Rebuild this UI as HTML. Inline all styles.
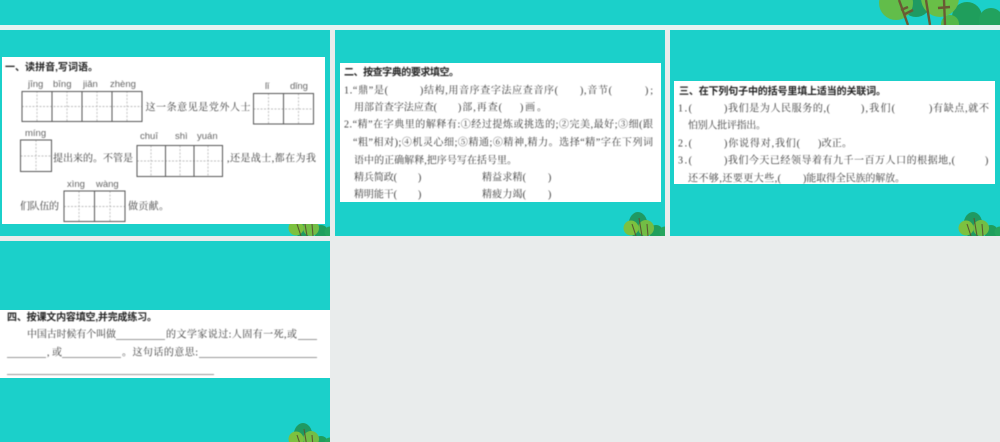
<!DOCTYPE html>
<html lang="zh"><head><meta charset="utf-8"><title>语文练习</title>
<style>
html,body{margin:0;padding:0;width:1000px;height:442px;overflow:hidden;background:#e9ecec}
svg{position:absolute;left:0;top:0;display:block}
.b{font:700 10px "Liberation Sans","Noto Sans CJK SC",sans-serif;fill:#222}
.s{font:400 10px "Liberation Serif","Noto Serif CJK SC",serif;fill:#3a3a3a}
.p{font:400 9.5px "Liberation Sans","DejaVu Sans",sans-serif;fill:#666}
.g{fill:none;stroke:#555;stroke-width:1}
.d{fill:none;stroke:#aaa;stroke-width:.7;stroke-dasharray:2 1.5}
.u{stroke:#777;stroke-width:.8}
.blur{filter:blur(.4px)}
</style></head><body>
<svg width="1000" height="442" viewBox="0 0 1000 442" xmlns="http://www.w3.org/2000/svg">
<defs>
<g id="tree">
<circle cx="656" cy="232" r="7" fill="#1f9e5c"/><circle cx="665" cy="232" r="5.500" fill="#25a55e"/>
<ellipse cx="638" cy="225" rx="9.500" ry="13" fill="#1f9a62"/>
<circle cx="631" cy="228" r="7.500" fill="#7cc13f"/><circle cx="646" cy="228" r="8" fill="#72bd45"/>
<path d="M632 224L636 236M639 218L642 236M647 224L648 236" stroke="#5a5a32" stroke-width="1.100" fill="none"/>
</g>
<clipPath id="c1"><rect x="0" y="30" width="330" height="206"/></clipPath>
<clipPath id="c2"><rect x="335" y="30" width="330" height="206"/></clipPath>
<clipPath id="c3"><rect x="670" y="30" width="330" height="206"/></clipPath>
<clipPath id="c4"><rect x="0" y="241" width="330" height="201"/></clipPath>
<clipPath id="c0"><rect x="860" y="0" width="140" height="25"/></clipPath>
</defs>
<rect width="1000" height="442" fill="#e9ecec"/>
<rect x="0" y="25" width="1000" height="5" fill="#e6f3f1"/>
<rect x="0" y="0" width="1000" height="25" fill="#1bd0ca"/>
<rect x="0" y="30" width="330" height="206" fill="#1bd0ca"/>
<rect x="335" y="30" width="330" height="206" fill="#1bd0ca"/>
<rect x="670" y="30" width="330" height="206" fill="#1bd0ca"/>
<rect x="0" y="241" width="330" height="201" fill="#1bd0ca"/>
<g clip-path="url(#c0)">
<circle cx="967" cy="17" r="15" fill="#1f9e5c"/><circle cx="991" cy="20" r="12" fill="#22a25e"/>
<circle cx="916" cy="2" r="15" fill="#1f9a62"/><circle cx="950" cy="24" r="9" fill="#52b848"/>
<circle cx="896" cy="3" r="17" fill="#62bd4a"/><circle cx="940" cy="-2" r="19" fill="#69bf47"/>
<path d="M899 0L908 25M926 0L930 25M944 0L945 25M901 10L908 7M905 14L913 10M938 8L950 7" stroke="#6a5a34" stroke-width="2.400" fill="none"/>
</g>
<g clip-path="url(#c1)"><use href="#tree" x="-335"/></g>
<g clip-path="url(#c2)"><use href="#tree"/></g>
<g clip-path="url(#c3)"><use href="#tree" x="335"/></g>
<g clip-path="url(#c4)"><use href="#tree" x="-335" y="211"/></g>
<rect x="2" y="57" width="323" height="167" fill="#fff"/>
<rect x="340" y="63" width="321" height="139" fill="#fff"/>
<rect x="674" y="81" width="321" height="103" fill="#fff"/>
<rect x="0" y="310" width="330" height="68" fill="#fff"/>
</svg>
<svg class="blur" width="1000" height="442" viewBox="0 0 1000 442" xmlns="http://www.w3.org/2000/svg">
<g class="d">
<path d="M22 106.500H142M37 91V122M67 91V122M97 91V122M127 91V122"/>
<path d="M253.500 109H313.500M268.500 93.500V124M298.500 93.500V124"/>
<path d="M20.500 156H51.500M36 140V171.500"/>
<path d="M137 161H222.500M151 145.500V176.500M180 145.500V176.500M208 145.500V176.500"/>
<path d="M64 206.500H125M79 191V222M110 191V222"/>
</g>
<g class="g">
<rect x="22" y="91.500" width="120" height="30"/><path d="M52 91.500V121.500M82 91.500V121.500M112 91.500V121.500"/>
<rect x="253.500" y="93.500" width="60" height="30.500"/><path d="M283.500 93.500V124"/>
<rect x="20.500" y="140" width="31" height="31.500"/>
<rect x="137" y="145.500" width="85.500" height="31"/><path d="M165.500 145.500V176.500M194 145.500V176.500"/>
<rect x="64" y="191" width="61" height="30.500"/><path d="M94.500 191V221.500"/>
</g>
<text class="b" x="5" y="70.500" textLength="93">一、读拼音,写词语。</text>
<g class="p">
<text x="28" y="87">jīng</text><text x="53" y="87">bīng</text><text x="83" y="87">jiǎn</text><text x="110" y="87">zhèng</text>
<text x="265" y="89">lǐ</text><text x="290" y="89">dǐng</text>
<text x="25" y="136">míng</text>
<text x="140" y="139">chuī</text><text x="175" y="139">shì</text><text x="197" y="139">yuán</text>
<text x="67" y="187">xìng</text><text x="96" y="187">wàng</text>
</g>
<g class="s">
<text x="145.500" y="110.500" textLength="105">这一条意见是党外人士</text>
<text x="53" y="161.500" textLength="80">提出来的。不管是</text>
<text x="227" y="161.500" textLength="89">,还是战士,都在为我</text>
<text x="20" y="209.500" textLength="39">们队伍的</text>
<text x="128" y="209.500" textLength="41">做贡献。</text>
</g>
<text class="b" x="344" y="75.500" textLength="115">二、按查字典的要求填空。</text>
<g class="s">
<text x="344" y="93.500" textLength="44">1.“鼎”是(</text>
<text x="420" y="93.500" textLength="138">)结构,用音序查字法应查音序(</text>
<text x="580" y="93.500" textLength="32">),音节(</text>
<text x="645" y="93.500" textLength="8">);</text>
<text x="354" y="110.500" textLength="83">用部首查字法应查(</text>
<text x="458" y="110.500" textLength="44">)部,再查(</text>
<text x="520" y="110.500" textLength="27">)画。</text>
<text x="344" y="127.500" textLength="309">2.“精”在字典里的解释有:①经过提炼或挑选的;②完美,最好;③细(跟</text>
<text x="353" y="145.500" textLength="300">“粗”相对);④机灵心细;⑤精通;⑥精神,精力。选择“精”字在下列词</text>
<text x="354" y="163.500" textLength="163">语中的正确解释,把序号写在括号里。</text>
<text x="354" y="180.500" textLength="43">精兵简政(</text><text x="418" y="180.500">)</text>
<text x="482" y="180.500" textLength="44">精益求精(</text><text x="548" y="180.500">)</text>
<text x="354" y="197.500" textLength="43">精明能干(</text><text x="418" y="197.500">)</text>
<text x="482" y="197.500" textLength="44">精疲力竭(</text><text x="548" y="197.500">)</text>
</g>
<text class="b" x="679" y="94.500" textLength="207">三、在下列句子中的括号里填上适当的关联词。</text>
<g class="s">
<text x="678" y="111.500" textLength="14">1.(</text>
<text x="724" y="111.500" textLength="106">)我们是为人民服务的,(</text>
<text x="861" y="111.500" textLength="34">),我们(</text>
<text x="929" y="111.500" textLength="60">)有缺点,就不</text>
<text x="688" y="128.500" textLength="78">怕别人批评指出。</text>
<text x="678" y="146.500" textLength="14">2.(</text>
<text x="724" y="146.500" textLength="76">)你说得对,我们(</text>
<text x="818" y="146.500" textLength="34">)改正。</text>
<text x="678" y="163.500" textLength="14">3.(</text>
<text x="724" y="163.500" textLength="231">)我们今天已经领导着有九千一百万人口的根据地,(</text>
<text x="985" y="163.500">)</text>
<text x="688" y="181.500" textLength="93">还不够,还要更大些,(</text>
<text x="803" y="181.500" textLength="102">)能取得全民族的解放。</text>
</g>
<text class="b" x="7" y="320.500" textLength="150">四、按课文内容填空,并完成练习。</text>
<g class="s">
<text x="27" y="337.500" textLength="89">中国古时候有个叫做</text>
<text x="166" y="337.500" textLength="131">的文学家说过:人固有一死,或</text>
<text x="47" y="355.500" textLength="15">,或</text>
<text x="122" y="355.500" textLength="76">。这句话的意思:</text>
</g>
<g class="u">
<path d="M116 339.500H165M298 339.500H317M7 357.500H46M62 357.500H121M199 357.500H317M7 374.500H214" fill="none"/>
</g>
</svg>
</body></html>
